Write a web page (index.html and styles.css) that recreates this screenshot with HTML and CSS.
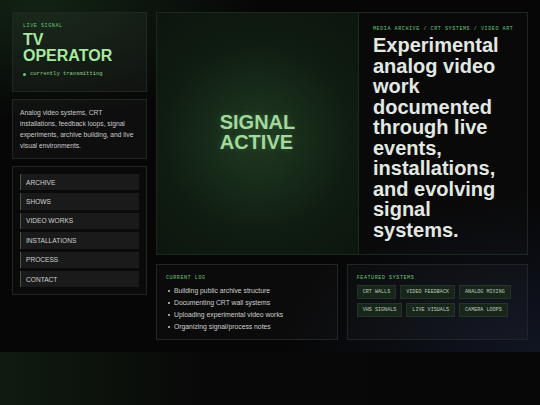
FILE: index.html
```html
<!DOCTYPE html>
<html lang="en">
<head>
<meta charset="utf-8">
<title>TV Operator</title>
<link rel="stylesheet" href="styles.css">
</head>
<body>
<div class="page">
  <aside class="side">
    <section class="card brand">
      <div class="label">LIVE SIGNAL</div>
      <h1 class="title">TV<br>OPERATOR</h1>
      <div class="status"><span class="dot"></span>currently transmitting</div>
    </section>
    <section class="card desc">
      <p>Analog video systems, CRT installations, feedback loops, signal experiments, archive building, and live visual environments.</p>
    </section>
    <nav class="card nav">
      <a class="nav-item">ARCHIVE</a>
      <a class="nav-item">SHOWS</a>
      <a class="nav-item">VIDEO WORKS</a>
      <a class="nav-item">INSTALLATIONS</a>
      <a class="nav-item">PROCESS</a>
      <a class="nav-item">CONTACT</a>
    </nav>
  </aside>
  <main class="main">
    <section class="hero">
      <div class="screen"><div class="screen-text">SIGNAL<br>ACTIVE</div></div>
      <div class="intro">
        <div class="label nowrap">MEDIA ARCHIVE / CRT SYSTEMS / VIDEO ART</div>
        <h2 class="headline">Experimental analog video work documented through live events, installations, and evolving signal systems.</h2>
      </div>
    </section>
    <section class="bottom">
      <div class="card panel">
        <div class="label">CURRENT LOG</div>
        <ul class="log">
          <li>Building public archive structure</li>
          <li>Documenting CRT wall systems</li>
          <li>Uploading experimental video works</li>
          <li>Organizing signal/process notes</li>
        </ul>
      </div>
      <div class="card panel">
        <div class="label">FEATURED SYSTEMS</div>
        <div class="tags">
          <span class="tag">CRT WALLS</span>
          <span class="tag">VIDEO FEEDBACK</span>
          <span class="tag">ANALOG MIXING</span>
          <span class="tag">VHS SIGNALS</span>
          <span class="tag">LIVE VISUALS</span>
          <span class="tag">CAMERA LOOPS</span>
        </div>
      </div>
    </section>
  </main>
</div>
</body>
</html>
```

FILE: styles.css
```css
html {
  background: linear-gradient(90deg, #0f1b10 0%, #0c120c 18%, #080808 38%, #070707 100%);
  min-height: 100%;
}
* { box-sizing: border-box; }
body {
  margin: 0;
  padding: 12px;
  font-family: "Liberation Sans", Arial, sans-serif;
  color: #d0d0d0;
  background:
    radial-gradient(ellipse 220px 120px at 40px 0px, rgba(40, 90, 45, 0.35), transparent 100%),
    radial-gradient(ellipse 260px 160px at 540px 352px, rgba(30, 40, 70, 0.45), transparent 100%),
    #060606;
}
.page {
  display: grid;
  grid-template-columns: 135px 1fr;
  gap: 9px;
  align-items: start;
}
.side {
  display: flex;
  flex-direction: column;
  gap: 7px;
}
.card {
  border: 1px solid #1f2820;
  background: rgba(255, 255, 255, 0.035);
}
.label {
  font-family: "Liberation Mono", "DejaVu Sans Mono", monospace;
  font-size: 5px;
  letter-spacing: 0.6px;
  line-height: 6px;
  color: #6cc878;
}
.nowrap {
  white-space: nowrap;
}
.brand {
  padding: 10px 10px 14px;
  background: rgba(255, 255, 255, 0.04);
}
.title {
  margin: 3px 0 0;
  font-size: 16px;
  line-height: 16px;
  font-weight: 700;
  color: #a8e8a0;
  letter-spacing: 0;
}
.status {
  margin-top: 7px;
  display: flex;
  align-items: center;
  gap: 4px;
  font-family: "Liberation Mono", "DejaVu Sans Mono", monospace;
  font-size: 5.5px;
  line-height: 6px;
  color: #8fd090;
}
.dot {
  width: 3px;
  height: 3px;
  border-radius: 50%;
  background: #5fd06a;
}
.desc {
  padding: 7px;
}
.desc p {
  margin: 0;
  font-size: 6.7px;
  line-height: 11px;
  color: #c9c9c9;
}
.nav {
  padding: 7px;
  display: flex;
  flex-direction: column;
  gap: 3px;
  background: rgba(255, 255, 255, 0.02);
}
.nav-item {
  display: flex;
  align-items: center;
  height: 16.4px;
  padding-left: 5px;
  background: #1a1a1a;
  border-left: 1px solid #3c5c3e;
  font-size: 6.6px;
  color: #d2d2d2;
}
.main {
  display: flex;
  flex-direction: column;
  gap: 9px;
}
.hero {
  display: grid;
  grid-template-columns: 202px 1fr;
  border: 1px solid #1d2820;
  height: 243px;
}
.screen {
  border-right: 1px solid #1d2a20;
  background: radial-gradient(circle at 50% 52%, #203822 0%, #182c1a 28%, #0f1c11 60%, #0c150e 100%);
  display: flex;
  align-items: center;
  justify-content: center;
}
.screen-text {
  font-size: 20px;
  line-height: 20px;
  font-weight: 700;
  color: #a3d99c;
  text-shadow: 0 0 6px rgba(120, 220, 120, 0.25);
  padding-bottom: 3px;
}
.intro {
  padding: 13px 14px 10px 14px;
  background: rgba(255, 255, 255, 0.015);
}
.headline {
  margin: 3px 0 0;
  font-size: 20px;
  line-height: 20.5px;
  font-weight: 700;
  color: #e2e8e2;
}
.bottom {
  display: grid;
  grid-template-columns: 1fr 1fr;
  gap: 9px;
}
.panel {
  padding: 10px 9px 8px;
  height: 76px;
  border-color: #212523;
  background: rgba(255, 255, 255, 0.025);
}
.log {
  list-style: none;
  margin: 4px 0 0;
  padding: 0 0 0 2px;
}
.log li {
  display: flex;
  align-items: center;
  gap: 4px;
  font-size: 6.8px;
  line-height: 12px;
  color: #cfcfcf;
}
.log li::before {
  content: "";
  width: 2px;
  height: 2px;
  background: #cfcfcf;
  border-radius: 50%;
}
.tags {
  margin-top: 4px;
  display: flex;
  flex-wrap: wrap;
  gap: 4px;
}
.tag {
  height: 14px;
  display: flex;
  align-items: center;
  padding: 0 5px;
  background: #17251b;
  border: 1px solid #243428;
  font-family: "Liberation Mono", "DejaVu Sans Mono", monospace;
  font-size: 5.1px;
  color: #b9cbb9;
}
```
